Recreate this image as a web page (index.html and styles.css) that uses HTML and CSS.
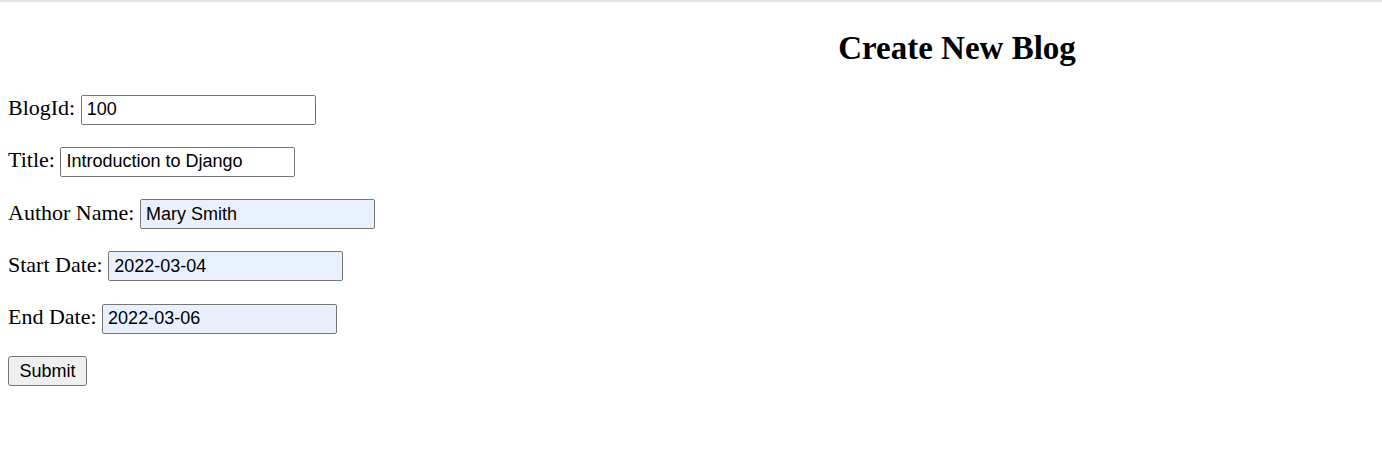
FILE: index.html
```html
<!DOCTYPE html>
<html>
<head>
<meta charset="utf-8">
<link rel="stylesheet" href="styles.css">
</head>
<body>
<h2 class="title">Create New Blog</h2>
<form class="blog-form">
  <p class="row"><span class="label">BlogId:</span><input class="field" type="text" value="100"></p>
  <p class="row"><span class="label">Title:</span><input class="field" type="text" value="Introduction to Django"></p>
  <p class="row"><span class="label">Author Name:</span><input class="field filled" type="text" value="Mary Smith"></p>
  <p class="row"><span class="label">Start Date:</span><input class="field filled" type="text" value="2022-03-04"></p>
  <p class="row"><span class="label">End Date:</span><input class="field filled" type="text" value="2022-03-06"></p>
  <p class="row submit-row"><button class="submit" type="button">Submit</button></p>
</form>
</body>
</html>
```
FILE: styles.css
```css
html {
  border-top: 2px solid #e3e3e3;
}
body {
  margin: 0 8px;
  font-family: "Liberation Serif", "Times New Roman", serif;
  font-size: 22px;
  color: #000;
  background: #fff;
}
.title {
  font-size: 33px;
  font-weight: bold;
  margin: 28px 0 26px 0;
  padding-left: 532px;
  text-align: center;
  line-height: 37px;
}
.blog-form {
  margin: 0;
}
.row {
  display: flex;
  align-items: baseline;
  gap: 5.5px;
  height: 30.25px;
  margin: 22px 0 0 0;
  line-height: 30px;
}
.submit-row {
  align-items: flex-start;
  height: 32px;
  margin-top: 24px;
}
.field {
  box-sizing: border-box;
  width: 235px;
  height: 30px;
  border: 1px solid #767676;
  border-radius: 2px;
  padding: 0 5px;
  font-family: "Liberation Sans", Arial, sans-serif;
  font-size: 18px;
  color: #000;
  background: #fff;
}
.field.filled {
  background: #e8f0fe;
}
.submit {
  box-sizing: border-box;
  width: 79px;
  height: 30px;
  border: 1px solid #767676;
  border-radius: 3px;
  background: #efefef;
  font-family: "Liberation Sans", Arial, sans-serif;
  font-size: 18px;
  line-height: 20px;
  color: #000;
  padding: 0;
}
```
